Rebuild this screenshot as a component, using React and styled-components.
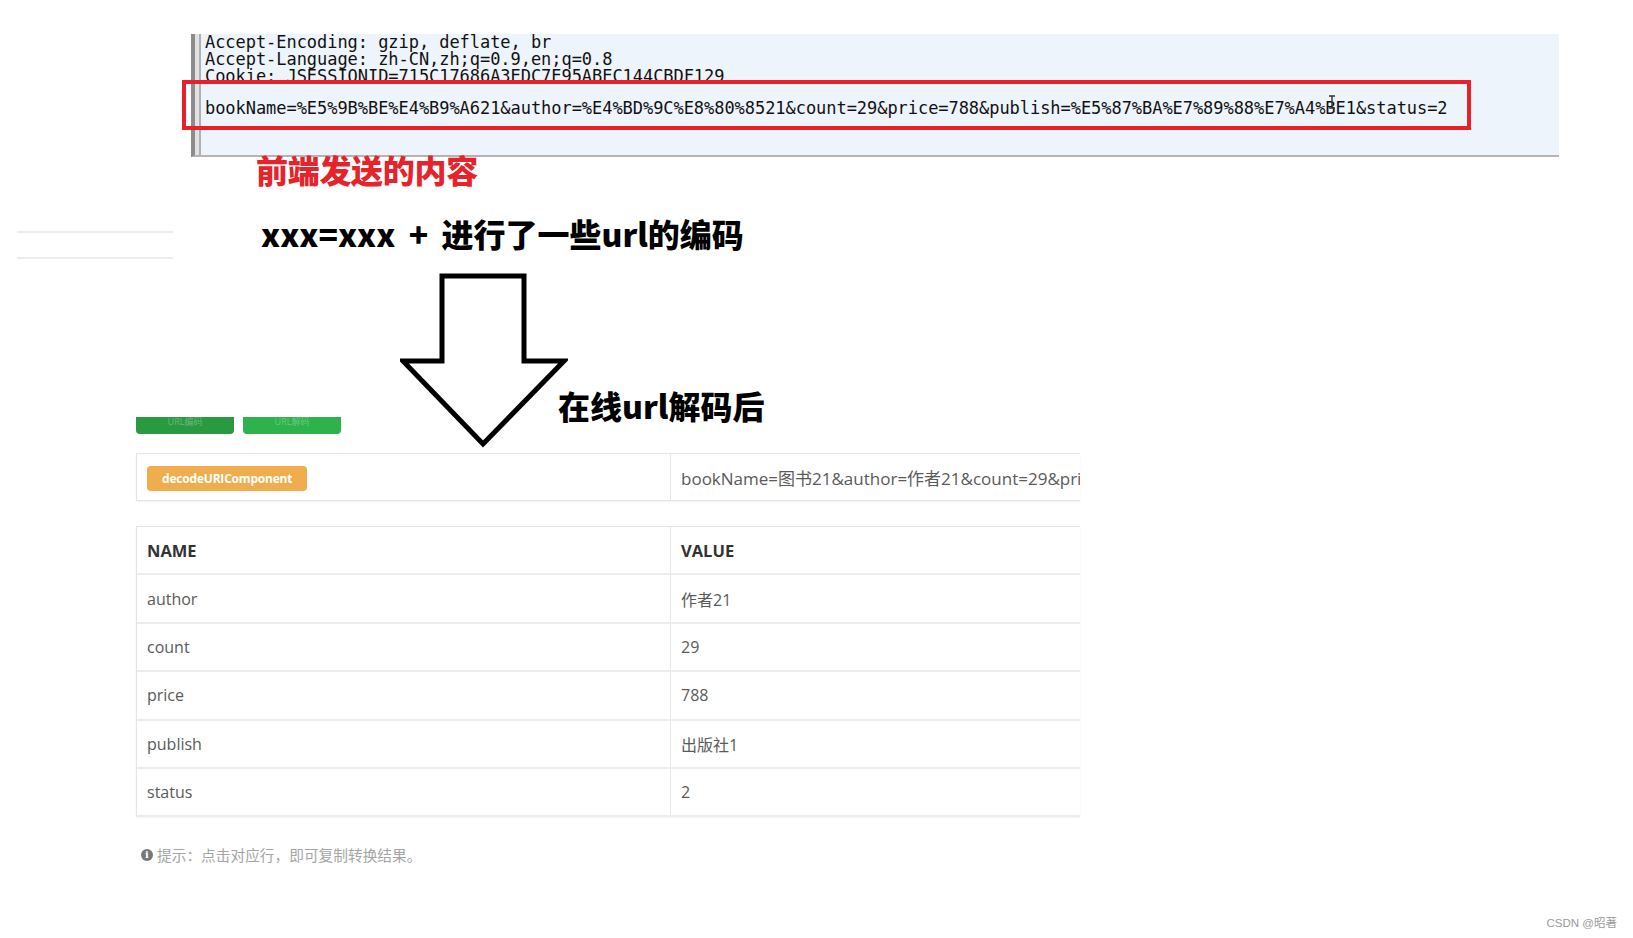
import styled, { createGlobalStyle } from 'styled-components';

const GlobalStyle = createGlobalStyle`
  html, body {
    margin: 0;
    padding: 0;
    background: #fff;
  }
  body {
    font-family: "Open Sans", "Noto Sans CJK SC", sans-serif;
  }
`;

const params = [
  { name: 'author', value: '作者21' },
  { name: 'count', value: '29' },
  { name: 'price', value: '788' },
  { name: 'publish', value: '出版社1' },
  { name: 'status', value: '2' }
];

const App = () => {
  return (
    <Page>
      <GlobalStyle />
      <RequestPanel>
        <CodeLine>Accept-Encoding: gzip, deflate, br</CodeLine>
        <CodeLine>Accept-Language: zh-CN,zh;q=0.9,en;q=0.8</CodeLine>
        <CodeLine>Cookie: JSESSIONID=715C17686A3EDC7E95ABEC144CBDF129</CodeLine>
        <Highlight>
          <CodeLine>
            bookName=%E5%9B%BE%E4%B9%A621&amp;author=%E4%BD%9C%E8%80%8521&amp;count=29&amp;price=788&amp;publish=%E5%87%BA%E7%89%88%E7%A4%BE1&amp;status=2
          </CodeLine>
          <TextCursor width="8" height="14" viewBox="0 0 8 14">
            <path d="M1 1h6M4 1v12M1 13h6" stroke="#333" strokeWidth="1.4" fill="none" />
          </TextCursor>
        </Highlight>
      </RequestPanel>

      <NoteRow>
        <GhostColumn>
          <GhostLine />
          <GhostLine />
        </GhostColumn>
        <Notes>
          <RedNote>前端发送的内容</RedNote>
          <BlackNote $indent={5}>xxx=xxx + 进行了一些url的编码</BlackNote>
        </Notes>
      </NoteRow>

      <ArrowRow>
        <ButtonGroup>
          <GreenButton $dark>URL编码</GreenButton>
          <GreenButton>URL解码</GreenButton>
        </ButtonGroup>
        <DownArrow width="168" height="175" viewBox="0 0 168 175">
          <polygon
            points="42,3 124,3 124,88 164,88 83,171 3,88 42,88"
            fill="#fff"
            stroke="#000"
            strokeWidth="5"
            strokeLinejoin="miter"
          />
        </DownArrow>
        <BlackNote as={ArrowLabel}>在线url解码后</BlackNote>
      </ArrowRow>

      <Card>
        <NameCell>
          <Badge>decodeURIComponent</Badge>
        </NameCell>
        <ValueCell $wide>bookName=图书21&amp;author=作者21&amp;count=29&amp;price=788&amp;publish=出版社1&amp;status=2</ValueCell>
      </Card>

      <TableCard>
        <TableRow $head>
          <NameCell>NAME</NameCell>
          <ValueCell>VALUE</ValueCell>
        </TableRow>
        {params.map((p) => (
          <TableRow key={p.name}>
            <NameCell>{p.name}</NameCell>
            <ValueCell>{p.value}</ValueCell>
          </TableRow>
        ))}
      </TableCard>

      <Hint>
        <InfoIcon>i</InfoIcon>
        提示：点击对应行，即可复制转换结果。
      </Hint>

      <Footer>
        <Watermark>CSDN @昭著</Watermark>
      </Footer>
    </Page>
  );
};

const Page = styled.div`
  width: 1633px;
  height: 938px;
  display: flex;
  flex-direction: column;
  overflow: hidden;
  padding-top: 34px;
  box-sizing: border-box;
`;

const RequestPanel = styled.div`
  margin-left: 191px;
  width: 1368px;
  box-sizing: border-box;
  background: #eef4fc;
  border-left: 4px solid #8c8c8c;
  border-bottom: 2px solid #b4b4b4;
  box-shadow: inset 4px 0 0 #e2e2e2, inset 6px 0 0 #b0b0b0;
  padding: 0 0 25px 10px;
  display: flex;
  flex-direction: column;
`;

const CodeLine = styled.div`
  font-family: "DejaVu Sans Mono", "Liberation Mono", monospace;
  font-size: 17px;
  line-height: 17px;
  color: #111;
  white-space: nowrap;
  letter-spacing: -0.05px;
`;

const Highlight = styled.div`
  position: relative;
  margin: -5px 0 0 -23px;
  width: 1289px;
  height: 50px;
  box-sizing: border-box;
  border: 4px solid #e8202a;
  padding: 7px 0 0 19px;
  display: flex;
  align-items: center;
`;

const TextCursor = styled.svg`
  position: absolute;
  left: 1142px;
  top: 11px;
`;

const NoteRow = styled.div`
  display: flex;
  align-items: flex-start;
  margin-left: 17px;
`;

const GhostColumn = styled.div`
  width: 156px;
  padding-top: 74px;
  display: flex;
  flex-direction: column;
  gap: 24px;
`;

const GhostLine = styled.div`
  height: 2px;
  background: #ececec;
`;

const Notes = styled.div`
  margin-left: 83px;
  display: flex;
  flex-direction: column;
  gap: 32px;
  margin-top: -4px;
`;

const RedNote = styled.div`
  font-family: "Noto Sans CJK SC", sans-serif;
  font-weight: 900;
  font-size: 32px;
  line-height: 32px;
  color: #e8222a;
  letter-spacing: -0.3px;
`;

const BlackNote = styled.div`
  font-family: "Noto Sans CJK SC", sans-serif;
  font-weight: 900;
  font-size: 32px;
  line-height: 32px;
  color: #000;
  padding-left: ${(p) => p.$indent || 0}px;
  word-spacing: 6px;
`;

const ArrowRow = styled.div`
  display: flex;
  align-items: flex-end;
  margin: 14px 0 0 136px;
`;

const ButtonGroup = styled.div`
  display: flex;
  gap: 9px;
  margin-bottom: 12px;
`;

const GreenButton = styled.div`
  width: 98px;
  height: 17px;
  border-radius: 0 0 4px 4px;
  background: ${(p) => (p.$dark ? '#2a9a40' : '#2db24c')};
  color: rgba(255, 255, 255, 0.3);
  font-size: 9px;
  line-height: 10px;
  text-align: center;
`;

const DownArrow = styled.svg`
  display: block;
  margin-left: 59px;
  margin-bottom: -2px;
`;

const ArrowLabel = styled.div`
  align-self: flex-start;
  margin: 116px 0 0 -10px;
`;

const Card = styled.div`
  margin: 7px 0 0 136px;
  width: 944px;
  height: 48px;
  box-sizing: border-box;
  border: 1px solid #e4e4e4;
  border-right: none;
  box-shadow: 0 1px 2px rgba(0, 0, 0, 0.05);
  display: grid;
  grid-template-columns: 534px 1fr;
  overflow: hidden;
`;

const NameCell = styled.div`
  display: flex;
  align-items: center;
  padding-left: 10px;
  border-right: 1px solid #e6e6e6;
  font-size: 16px;
  color: #5a5a5a;
  white-space: nowrap;
`;

const ValueCell = styled.div`
  display: flex;
  align-items: center;
  padding-left: 10px;
  font-size: ${(p) => (p.$wide ? '17px' : '16px')};
  color: #5a5a5a;
  white-space: nowrap;
  overflow: hidden;
`;

const Badge = styled.span`
  display: inline-flex;
  align-items: center;
  height: 25px;
  margin-top: 2px;
  padding: 0 15px;
  border-radius: 4px;
  background: #f0ad4e;
  color: #fff;
  font-weight: 700;
  font-size: 12px;
  letter-spacing: -0.2px;
`;

const TableCard = styled.div`
  margin: 25px 0 0 136px;
  width: 944px;
  box-sizing: border-box;
  border: 1px solid #e4e4e4;
  border-right: none;
  border-bottom: none;
  box-shadow: 0 1px 2px rgba(0, 0, 0, 0.05);
  display: flex;
  flex-direction: column;
  overflow: hidden;
`;

const TableRow = styled.div`
  display: grid;
  grid-template-columns: 534px 1fr;
  height: 48.4px;
  box-sizing: border-box;
  border-bottom: 2px solid #ececec;

  ${NameCell}, ${ValueCell} {
    font-weight: ${(p) => (p.$head ? 700 : 400)};
    color: ${(p) => (p.$head ? '#333' : '#5a5a5a')};
    font-size: ${(p) => (p.$head ? '16.5px' : '16px')};
  }
`;

const Hint = styled.div`
  margin: 28px 0 0 141px;
  display: flex;
  align-items: center;
  gap: 4px;
  font-family: "Noto Sans CJK SC", sans-serif;
  font-size: 14.7px;
  line-height: 20px;
  color: #a5a5a5;
`;

const InfoIcon = styled.span`
  width: 12px;
  height: 12px;
  border-radius: 50%;
  background: #777;
  color: #fff;
  font-family: "DejaVu Serif", serif;
  font-weight: 700;
  font-size: 10px;
  line-height: 12px;
  text-align: center;
`;

const Footer = styled.div`
  margin-top: auto;
  display: flex;
  justify-content: flex-end;
  padding: 0 16px 7px 0;
`;

const Watermark = styled.div`
  font-family: "Liberation Sans", "Noto Sans CJK SC", sans-serif;
  font-size: 11.5px;
  line-height: 16px;
  color: #9a9a9a;
`;

export default App;
